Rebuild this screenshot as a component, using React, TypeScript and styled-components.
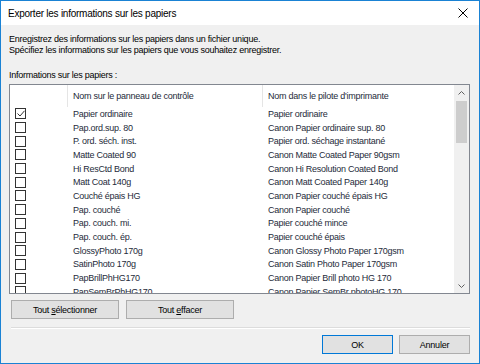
import React from 'react';
import styled, { createGlobalStyle } from 'styled-components';

const GlobalStyle = createGlobalStyle`
  html, body {
    margin: 0;
    padding: 0;
    background: #f0f0f0;
  }
  body {
    font-family: 'Liberation Sans', Arial, sans-serif;
    font-size: 9px;
    letter-spacing: -0.25px;
    color: #000;
  }
`;

const Window = styled.div`
  width: 480px;
  height: 364px;
  box-sizing: border-box;
  border: 1px solid #1a82d4;
  background: #f0f0f0;
  display: flex;
  flex-direction: column;
`;

const TitleBar = styled.div`
  height: 24px;
  background: #fff;
  display: flex;
  align-items: center;
  justify-content: space-between;
  padding: 0 10px 0 7px;
  font-size: 10px;
`;

const CloseButton = styled.div`
  width: 12px;
  height: 12px;
  display: flex;
  align-items: center;
  justify-content: center;
`;

const Body = styled.div`
  flex: 1;
  display: flex;
  flex-direction: column;
  padding: 9px 9px 0 8px;
`;

const Intro = styled.p`
  margin: 0;
  line-height: 11px;
`;

const Label = styled.div`
  margin-top: 14px;
  line-height: 11px;
`;

const ListBox = styled.div`
  margin-top: 3px;
  height: 208px;
  border: 1px solid #828790;
  background: #fff;
  display: flex;
  overflow: hidden;
`;

const ListContent = styled.div`
  flex: 1;
  display: flex;
  flex-direction: column;
  overflow: hidden;
`;

const HeaderRow = styled.div`
  display: grid;
  grid-template-columns: 57px 195px 1fr;
  height: 22px;
  flex-shrink: 0;
`;

const HeaderCell = styled.div<{ $sep?: boolean }>`
  display: flex;
  align-items: center;
  padding-left: 5px;
  border-left: ${({ $sep }) => ($sep ? '1px solid #e5e5e5' : 'none')};
  color: #1e2b3a;
`;

const Row = styled.div`
  display: grid;
  grid-template-columns: 57px 195px 1fr;
  height: 13.7px;
  flex-shrink: 0;
  align-items: center;
  color: #1e2b3a;
`;

const CheckCell = styled.div`
  padding-left: 5px;
  display: flex;
  align-items: center;
`;

const Box = styled.div`
  width: 9px;
  height: 9px;
  border: 1px solid #333;
  background: #fff;
  display: flex;
  align-items: center;
  justify-content: center;
`;

const Cell = styled.div`
  padding-left: 6px;
  white-space: nowrap;
`;

const ScrollBar = styled.div`
  width: 15px;
  border-left: 1px solid #fff;
  background: #f0f0f0;
  display: flex;
  flex-direction: column;
`;

const Arrow = styled.div`
  height: 15px;
  display: flex;
  align-items: center;
  justify-content: center;
`;

const Thumb = styled.div`
  height: 42px;
  margin: 1px 2px 0;
  background: #cdcdcd;
`;

const Track = styled.div`
  flex: 1;
`;

const ButtonRow = styled.div`
  display: flex;
  gap: 7px;
  margin-top: 6px;
  padding-left: 2px;
`;

const Button = styled.button<{ $default?: boolean; $w: number }>`
  width: ${({ $w }) => $w}px;
  height: 19px;
  box-sizing: border-box;
  border: 1px solid ${({ $default }) => ($default ? '#0078d7' : '#adadad')};
  background: #e1e1e1;
  font-family: inherit;
  font-size: 9px;
  letter-spacing: -0.25px;
  color: #000;
  padding: 0;
`;

const Separator = styled.div`
  height: 1px;
  background: #dcdcdc;
  border-bottom: 1px solid #fff;
  margin: 8px 0 0 2px;
`;

const Footer = styled.div`
  display: flex;
  justify-content: flex-end;
  gap: 6px;
  margin-top: 6px;
`;

const Check = () => (
  <svg width="8" height="7" viewBox="0 0 8 7">
    <path d="M0.5 3.5 L3 6 L7.5 0.8" fill="none" stroke="#333" strokeWidth="1" />
  </svg>
);

const rows: [string, string][] = [
  ['Papier ordinaire', 'Papier ordinaire'],
  ['Pap.ord.sup. 80', 'Canon Papier ordinaire sup. 80'],
  ['P. ord. séch. inst.', 'Papier ord. séchage instantané'],
  ['Matte Coated 90', 'Canon Matte Coated Paper 90gsm'],
  ['Hi ResCtd Bond', 'Canon Hi Resolution Coated Bond'],
  ['Matt Coat 140g', 'Canon Matt Coated Paper 140g'],
  ['Couché épais HG', 'Canon Papier couché épais HG'],
  ['Pap. couché', 'Canon Papier couché'],
  ['Pap. couch. mi.', 'Papier couché mince'],
  ['Pap. couch. ép.', 'Papier couché épais'],
  ['GlossyPhoto 170g', 'Canon Glossy Photo Paper 170gsm'],
  ['SatinPhoto 170g', 'Canon Satin Photo Paper 170gsm'],
  ['PapBrillPhHG170', 'Canon Papier Brill photo HG 170'],
  ['PapSemBrPhHG170', 'Canon Papier SemBr photoHG 170'],
];

const App: React.FC = () => {
  return (
    <>
      <GlobalStyle />
      <Window>
        <TitleBar>
          <span>Exporter les informations sur les papiers</span>
          <CloseButton>
            <svg width="10" height="10" viewBox="0 0 10 10">
              <path d="M0.5 0.5 L9.5 9.5 M9.5 0.5 L0.5 9.5" stroke="#000" strokeWidth="1" />
            </svg>
          </CloseButton>
        </TitleBar>
        <Body>
          <Intro>
            Enregistrez des informations sur les papiers dans un fichier unique.
            <br />
            Spécifiez les informations sur les papiers que vous souhaitez enregistrer.
          </Intro>
          <Label>Informations sur les papiers :</Label>
          <ListBox>
            <ListContent>
              <HeaderRow>
                <HeaderCell />
                <HeaderCell $sep>Nom sur le panneau de contrôle</HeaderCell>
                <HeaderCell $sep>Nom dans le pilote d'imprimante</HeaderCell>
              </HeaderRow>
              {rows.map(([a, b], i) => (
                <Row key={a}>
                  <CheckCell>
                    <Box>{i === 0 && <Check />}</Box>
                  </CheckCell>
                  <Cell>{a}</Cell>
                  <Cell>{b}</Cell>
                </Row>
              ))}
            </ListContent>
            <ScrollBar>
              <Arrow>
                <svg width="7" height="4" viewBox="0 0 7 4">
                  <path d="M0.5 3.5 L3.5 0.5 L6.5 3.5" fill="none" stroke="#606060" strokeWidth="1" />
                </svg>
              </Arrow>
              <Thumb />
              <Track />
              <Arrow>
                <svg width="7" height="4" viewBox="0 0 7 4">
                  <path d="M0.5 0.5 L3.5 3.5 L6.5 0.5" fill="none" stroke="#606060" strokeWidth="1" />
                </svg>
              </Arrow>
            </ScrollBar>
          </ListBox>
          <ButtonRow>
            <Button $w={108}>Tout <u>s</u>électionner</Button>
            <Button $w={108}>Tout <u>e</u>ffacer</Button>
          </ButtonRow>
          <Separator />
          <Footer>
            <Button $w={71} $default>OK</Button>
            <Button $w={71}>Annuler</Button>
          </Footer>
        </Body>
      </Window>
    </>
  );
};

export default App;
